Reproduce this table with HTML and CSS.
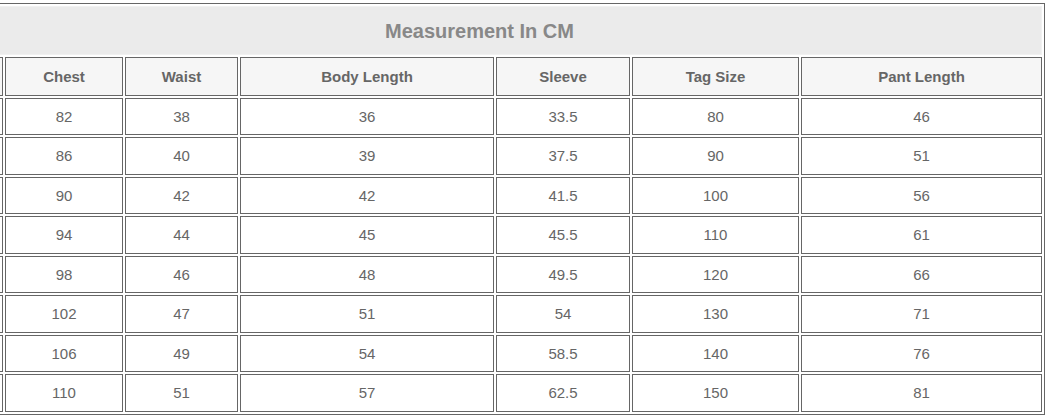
FILE: index.html
```html
<!DOCTYPE html>
<html>
<head>
<meta charset="utf-8">
<link rel="stylesheet" href="styles.css">
</head>
<body>
<div class="wrap">
<table class="size-table">
  <colgroup>
    <col class="c0"><col class="c1"><col class="c2"><col class="c3"><col class="c4"><col class="c5"><col class="c6">
  </colgroup>
  <thead>
    <tr><th class="title" colspan="7">Measurement In CM</th></tr>
    <tr class="head">
      <th></th><th>Chest</th><th>Waist</th><th>Body Length</th><th>Sleeve</th><th>Tag Size</th><th>Pant Length</th>
    </tr>
  </thead>
  <tbody>
    <tr><td></td><td>82</td><td>38</td><td>36</td><td>33.5</td><td>80</td><td>46</td></tr>
    <tr><td></td><td>86</td><td>40</td><td>39</td><td>37.5</td><td>90</td><td>51</td></tr>
    <tr><td></td><td>90</td><td>42</td><td>42</td><td>41.5</td><td>100</td><td>56</td></tr>
    <tr><td></td><td>94</td><td>44</td><td>45</td><td>45.5</td><td>110</td><td>61</td></tr>
    <tr><td></td><td>98</td><td>46</td><td>48</td><td>49.5</td><td>120</td><td>66</td></tr>
    <tr><td></td><td>102</td><td>47</td><td>51</td><td>54</td><td>130</td><td>71</td></tr>
    <tr><td></td><td>106</td><td>49</td><td>54</td><td>58.5</td><td>140</td><td>76</td></tr>
    <tr><td></td><td>110</td><td>51</td><td>57</td><td>62.5</td><td>150</td><td>81</td></tr>
  </tbody>
</table>
</div>
</body>
</html>
```
FILE: styles.css
```css
html, body {
  margin: 0;
  padding: 0;
  background: #ffffff;
}
.wrap {
  overflow: hidden;
  padding-top: 3px;
  width: 1045px;
}
.size-table {
  margin-left: -86px;
  width: 1131px;
  table-layout: fixed;
  border-collapse: separate;
  border-spacing: 2px;
  border: 1px solid #666666;
  font-family: "Liberation Sans", Arial, sans-serif;
  font-size: 15px;
  color: #666666;
}
.c0 { width: 86px; }
.c1 { width: 118px; }
.c2 { width: 113px; }
.c3 { width: 254px; }
.c4 { width: 134px; }
.c5 { width: 167px; }
.c6 { width: 241px; }
.size-table th,
.size-table td {
  padding: 0;
  text-align: center;
  vertical-align: middle;
  border: 1px solid #666666;
}
.size-table .title {
  height: 45px;
  padding-top: 2px;
  background: #ebebeb;
  border: 1px solid #f1f1f1;
  font-size: 20px;
  font-weight: bold;
  color: #888888;
}
.head th {
  height: 36.5px;
  background: #f6f6f6;
  font-weight: bold;
  color: #666666;
}
.size-table td {
  height: 35.5px;
  background: #ffffff;
}
```
